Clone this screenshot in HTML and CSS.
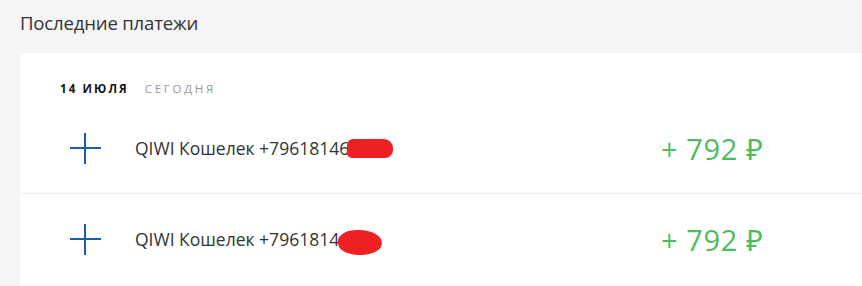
FILE: index.html
```html
<!DOCTYPE html>
<html lang="ru">
<head>
<meta charset="utf-8">
<link rel="stylesheet" href="styles.css">
</head>
<body>
<div class="page">
  <h2 class="title">Последние платежи</h2>
  <div class="card">
    <div class="date"><span class="date-main">14 июля</span><span class="date-sub">сегодня</span></div>
    <div class="row">
      <div class="icon"><svg width="32" height="32" viewBox="0 0 32 32"><path d="M16 1v31M1 16h31" stroke="#1c5ba8" stroke-width="2" fill="none"/></svg></div>
      <div class="name">QIWI Кошелек +79618146<span class="blot blot-a"></span></div>
      <div class="amount">+ 792 ₽</div>
    </div>
    <div class="row">
      <div class="icon"><svg width="32" height="32" viewBox="0 0 32 32"><path d="M16 1v31M1 16h31" stroke="#1c5ba8" stroke-width="2" fill="none"/></svg></div>
      <div class="name">QIWI Кошелек +7961814<span class="blot blot-b"></span></div>
      <div class="amount">+ 792 ₽</div>
    </div>
  </div>
</div>
</body>
</html>
```
FILE: styles.css
```css
html, body {
  margin: 0;
  padding: 0;
  background: #f5f5f5;
  overflow: hidden;
}
.page {
  width: 1000px;
  padding: 10px 0 0 20px;
  font-family: "Open Sans", "Noto Sans", sans-serif;
  color: #333;
}
.title {
  margin: 0;
  font-size: 18.6px;
  font-weight: 400;
  line-height: 26px;
  color: #333;
  letter-spacing: -0.2px;
}
.card {
  margin-top: 17px;
  background: #fff;
  border-radius: 4px 0 0 0;
  box-shadow: 0 0 2px rgba(0,0,0,0.06);
  height: 300px;
}
.date {
  padding: 20px 0 0 40px;
  height: 30px;
  display: flex;
  align-items: center;
  font-size: 11.5px;
  letter-spacing: 2.1px;
  text-transform: uppercase;
}
.date-main {
  font-weight: 700;
  color: #111;
}
.date-sub {
  margin-left: 16px;
  color: #999;
  font-weight: 400;
  letter-spacing: 2.7px;
}
.row {
  display: flex;
  align-items: center;
  height: 90px;
  border-bottom: 1px solid #ececec;
}
.row:last-child { border-bottom: none; }
.icon {
  width: 32px;
  height: 32px;
  margin-left: 49px;
  display: flex;
}
.name {
  margin-left: 34px;
  width: 526px;
  font-size: 17.5px;
  color: #333;
  display: flex;
  align-items: center;
}
.blot {
  display: inline-block;
  background: #ee2024;
}
.blot-a {
  width: 46px;
  height: 19px;
  margin-left: -2px;
  border-radius: 6px 9px 8px 5px;
}
.blot-b {
  width: 44px;
  height: 25px;
  margin-left: -1px;
  margin-top: 6px;
  border-radius: 45% 55% 50% 50%;
}
.amount {
  font-size: 29px;
  letter-spacing: 0.6px;
  color: #4dbb5f;
  font-weight: 400;
}
```
